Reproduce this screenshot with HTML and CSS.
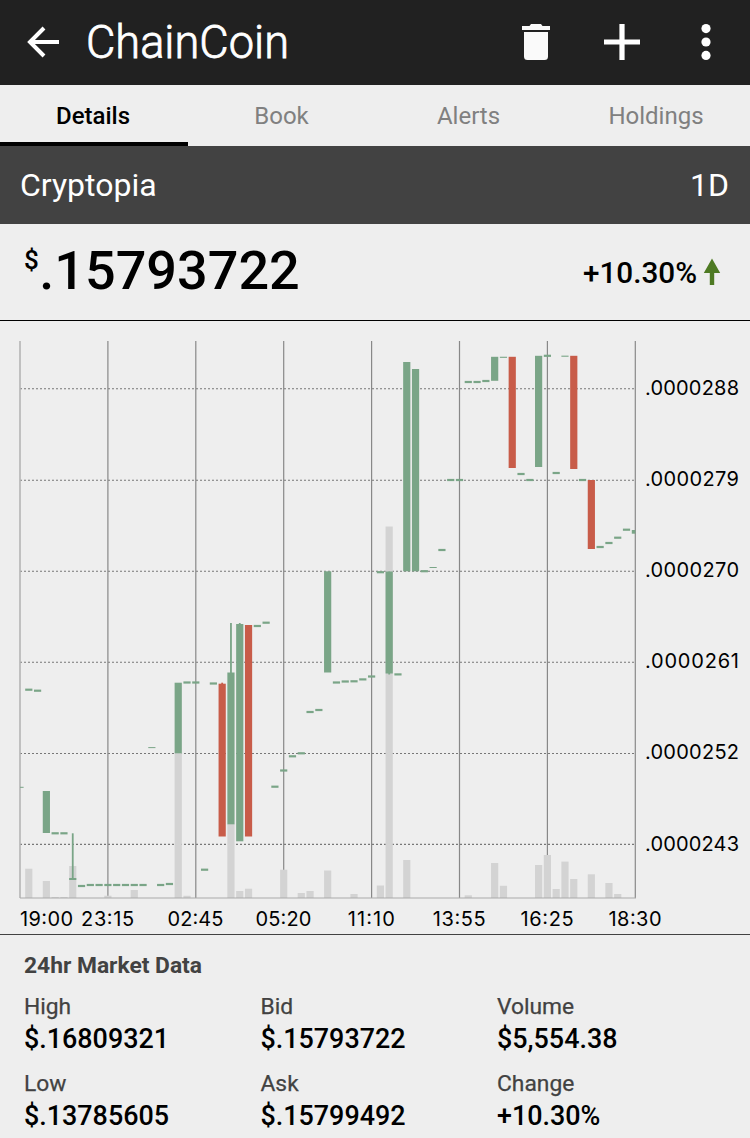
FILE: index.html
```html
<!DOCTYPE html>
<html lang="en">
<head>
<meta charset="utf-8">
<title>ChainCoin</title>
<link rel="stylesheet" href="styles.css">
</head>
<body>
<header class="appbar">
  <svg class="back" width="34" height="34" viewBox="0 0 34 34"><path d="M19 3 5 17 19 31M4.500 17H34" fill="none" stroke="#fff" stroke-width="4"/></svg>
  <h1 class="title"><svg width="210" height="60" viewBox="0 0 210 60"><text class="brand" x="-1" y="46" textLength="203" lengthAdjust="spacingAndGlyphs">ChainCoin</text></svg></h1>
  <svg class="trash" width="28" height="36" viewBox="0 0 28 36"><path d="M0 2H7.500L9 0H19L20.500 2H28V6H0ZM2 8H26V32.500Q26 36 22.500 36H5.500Q2 36 2 32.500Z" fill="#fafafa"/></svg>
  <svg class="plus" width="36" height="36" viewBox="0 0 36 36"><path d="M18 0V36M0 18H36" stroke="#fff" stroke-width="5.200"/></svg>
  <svg class="more" width="10" height="36" viewBox="0 0 10 36"><g fill="#fff"><circle cx="5" cy="4.600" r="4.600"/><circle cx="5" cy="18" r="4.600"/><circle cx="5" cy="31.400" r="4.600"/></g></svg>
</header>
<nav class="tabs">
  <a class="tab active">Details</a><a class="tab">Book</a><a class="tab">Alerts</a><a class="tab">Holdings</a>
</nav>
<div class="exchange"><span>Cryptopia</span><span>1D</span></div>
<section class="price">
  <div class="amount"><span class="currency">$</span><span class="value">.15793722</span></div>
  <div class="delta"><span>+10.30%</span><svg width="18" height="28" viewBox="0 0 18 28"><path d="M9 .5 17.200 15H11.200V27H6.800V15H.8Z" fill="#4e7a23"/></svg></div>
</section>
<section class="chart">
  <svg width="750" height="613" viewBox="0 321 750 613">
    <g id="grid"></g>
    <g id="volume"></g>
    <path class="axis" d="M20 898H636"/>
    <g id="candles"></g>
    <g id="labels"></g>
  </svg>
</section>
<section class="market">
  <h2>24hr Market Data</h2>
  <dl class="stats">
    <div><dt>High</dt><dd>$.16809321</dd></div>
    <div><dt>Bid</dt><dd>$.15793722</dd></div>
    <div><dt>Volume</dt><dd>$5,554.38</dd></div>
    <div><dt>Low</dt><dd>$.13785605</dd></div>
    <div><dt>Ask</dt><dd>$.15799492</dd></div>
    <div><dt>Change</dt><dd>+10.30%</dd></div>
  </dl>
</section>
<script src="chart.js"></script>
</body>
</html>
```
FILE: styles.css
```css
* { box-sizing: border-box; margin: 0; padding: 0; }
body { width: 750px; height: 1138px; overflow: hidden; background: #eee; color: #000; font-family: Roboto, sans-serif; }
svg { display: block; flex: none; }
.appbar { height: 85px; background: #212121; display: flex; align-items: center; padding: 0 39px 1px 25px; }
.title { margin-left: 28px; margin-right: auto; }
.brand { font: 300 46px Roboto, sans-serif; fill: #fff; stroke: #fff; stroke-width: .8px; }
.plus { margin-left: 54px; }
.more { margin-left: 61px; }
.tabs { height: 61px; display: grid; grid-template-columns: 188px 187px 187px 188px; font-size: 24px; color: #808080; }
.tab { display: flex; align-items: center; justify-content: center; border-bottom: 4px solid transparent; padding-top: 4px; }
.active { color: #000; font-weight: 500; border-bottom-color: #000; padding-right: 2px; }
.exchange { height: 78px; background: #424242; color: #fff; display: flex; align-items: center; justify-content: space-between; padding: 0 21px 0 20px; font-size: 32px; }
.price { height: 97px; border-bottom: 1px solid #000; display: flex; justify-content: space-between; align-items: center; padding: 0 29px 0 24px; font-weight: 500; }
.amount { display: flex; align-items: flex-start; padding-bottom: 2px; }
.currency { font-size: 26px; line-height: 30px; padding-top: 6px; }
.value { font-size: 54px; line-height: 64px; margin-left: .5px; }
.delta { display: flex; align-items: center; gap: 6px; font-size: 29.700px; }
.chart { height: 614px; border-bottom: 1px solid #424242; }
.axis { stroke: #aaa; stroke-width: 1.200; }
.vline { stroke: #888; stroke-width: 1.200; }
.vline-first { stroke: #b4b4b4; stroke-width: 1.600; }
.hline { stroke: #777; stroke-width: 1.100; stroke-dasharray: 2 2; }
.volume { fill: #d3d3d3; }
.up { fill: #7aa587; }
.down { fill: #c85c49; }
.label { font: 400 20px Inter, sans-serif; fill: #000; }
.market { padding: 15px 24px 0; }
.market h2 { font-size: 22.800px; line-height: 32px; font-weight: 700; color: #424242; }
.stats { display: grid; grid-template-columns: 236.500px 236.500px 1fr; row-gap: 13px; margin-top: 10px; }
.stats dt { font-size: 22.800px; line-height: 30px; color: #424242; -webkit-text-stroke: .25px #424242; }
.stats dd { font-size: 26.900px; line-height: 34px; font-weight: 500; }
```
FILE: chart.js
```js
const NS = 'http://www.w3.org/2000/svg';
const STEP = 8.79;
const WIDTH = 7.2;
const centre = i => 20 + STEP * i;

function add(parent, tag, attrs, text) {
  const el = document.createElementNS(NS, tag);
  for (const key in attrs) el.setAttribute(key, attrs[key]);
  if (text) el.textContent = text;
  document.getElementById(parent).appendChild(el);
}

// Grid and axis labels
[388.8, 480.2, 571.2, 662.3, 753.5, 844.4].forEach((y, k) => {
  add('grid', 'path', { class: 'hline', d: `M20 ${y}H635` });
  add('labels', 'text', { class: 'label', x: 645, y: 394.6 + k * 91.2, textLength: 94 },
    ['.0000288', '.0000279', '.0000270', '.0000261', '.0000252', '.0000243'][k]);
});
['19:00', '23:15', '02:45', '05:20', '11:10', '13:55', '16:25', '18:30'].forEach((t, k) => {
  const x = 20 + k * 87.9;
  add('grid', 'path', { class: k ? 'vline' : 'vline-first', d: `M${x} 341V898` });
  const w = [53, 53, 56, 56, 47, 53, 53, 53][k];
  add('labels', 'text', { class: 'label', x: k === 0 ? 20 : x - w / 2 - 0.3, y: 926.4, textLength: w }, t);
});

// Volume: [slot, top]
[[1,868.7],[3,881],[4,897],[5,897],[6,866],[10,895.7],[13,890],[18,753],[19,895.8],[24,824],[25,891],
 [26,888.7],[30,869.7],[32,893],[33,891],[35,870.5],[38,894],[41,885.5],[42,526.5],[44,860],[51,895.3],
 [54,863],[55,885.8],[59,865],[60,855],[61,889],[62,861.6],[63,879],[65,874.3],[67,883],[68,894]
].forEach(([i, y]) => add('volume', 'rect',
  { class: 'volume', x: centre(i) - WIDTH / 2, y, width: WIDTH, height: 898 - y }));

// Candles: [slot, top, bottom, class, wickTop, wickBottom]
const flat = (i, y, h = 2.2) => [i, y - h / 2, y + h / 2, 'up'];
[
  flat(1,689.7), flat(2,690.7), [3,791,833,'up'], flat(4,833.3), flat(5,833.3),
  [6,878,880,'up',833.3,879], flat(7,886), ...[8,9,10,11,12,13,14].map(i => flat(i,885)),
  flat(15,747.6,1), flat(16,885), flat(17,884), [18,682.7,753.3,'up'], flat(19,682.5), flat(20,682.5),
  flat(21,869.7), flat(22,683.5), [23,683.7,836.5,'down',682.7,684], [24,672.5,824.3,'up',623,673],
  [25,624,841.3,'up',623,625], [26,625,836.5,'down'], flat(27,626), flat(28,622.7), flat(29,786.7),
  flat(30,770.5), flat(31,756.3), flat(32,753.3), flat(33,712), flat(34,710), [35,571.3,672.5,'up'],
  flat(36,682.5), flat(37,681.5), flat(38,681.3), flat(39,679.4), flat(40,676.5), flat(41,572.2),
  [42,571.5,673.5,'up',571.5,674.5], flat(43,674.4), [44,362,571.3,'up'], [45,369,571.3,'up'],
  flat(46,571.2), flat(47,567.5,1), flat(48,550), flat(49,480), flat(50,480), flat(51,382), flat(52,382),
  flat(53,381), [54,356.8,380.8,'up'], flat(55,357.3,1.1), [56,356.8,468,'down'], flat(57,474), flat(58,480),
  [59,355.8,467,'up'], flat(60,355.8), flat(61,473), flat(62,356.2,1.1), [63,355.8,469,'down'], flat(64,480),
  [65,480,549,'down'], flat(66,547), flat(67,543), flat(68,537.7), flat(69,529.7)
].forEach(([i, top, bottom, cls, w0, w1]) => {
  if (w0) add('candles', 'rect', { class: cls, x: centre(i) - 0.9, y: w0, width: 1.8, height: w1 - w0 });
  add('candles', 'rect', { class: cls, x: centre(i) - WIDTH / 2, y: top, width: WIDTH, height: bottom - top });
});

// The edge slots are clipped at the plot's borders
add('candles', 'rect', { class: 'up', x: 20, y: 786.8, width: 3.6, height: 1 });
add('candles', 'rect', { class: 'up', x: 631.8, y: 530, width: 3.6, height: 3.7 });
```
